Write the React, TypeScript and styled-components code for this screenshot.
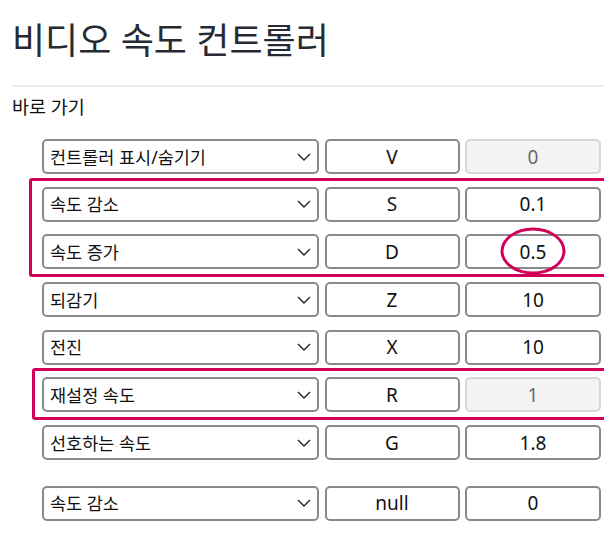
import React from "react";
import styled, { createGlobalStyle } from "styled-components";

const GlobalStyle = createGlobalStyle`
	html, body {
		margin: 0;
		padding: 0;
		background: #ffffff;
		overflow: hidden;
	}
	body {
		font-family: "Noto Sans", "Noto Sans CJK KR", sans-serif;
	}
`;

const KO = `"Noto Sans", "Noto Sans CJK KR", sans-serif`;
const PINK = "#d3005a";

const chevron = `url("data:image/svg+xml;utf8,<svg xmlns='http://www.w3.org/2000/svg' width='14' height='8' viewBox='0 0 14 8'><path d='M1 1l6 6 6-6' fill='none' stroke='%23222' stroke-width='1.4'/></svg>")`;

// **PAGE
const PageSC = styled.main`
	padding: 0 0 0 12px;
	width: 100%;
	box-sizing: border-box;
`;

const TitleSC = styled.h1`
	font-family: ${KO};
	font-size: 36px;
	font-weight: 400;
	line-height: 48px;
	color: #262b33;
	margin: 17px 0 0;
`;

const RuleSC = styled.hr`
	border: none;
	border-top: 2px solid #ececec;
	margin: 20px 0 0;
`;

const SectionSC = styled.h3`
	font-family: ${KO};
	font-size: 18.5px;
	font-weight: 400;
	line-height: 24px;
	color: #111;
	margin: 8px 0 0;
`;

// **SHORTCUT LIST
const ListSC = styled.section`
	display: flex;
	flex-direction: column;
	gap: 12.7px;
	padding-left: 30px;
	margin-top: 20px;
`;

const HighlightSC = styled.div<{ $inset: number }>`
	display: flex;
	flex-direction: column;
	gap: 12.7px;
	border: 3px solid ${PINK};
	border-radius: 3px;
	margin: -9px -40px -7.5px ${(p) => -(p.$inset + 3)}px;
	padding: 6px 0 4.5px ${(p) => p.$inset}px;
`;

const RowSC = styled.div<{ $spaced?: boolean }>`
	display: grid;
	grid-template-columns: 277px 135px 136px;
	column-gap: 5.5px;
	height: 35px;
	margin-top: ${(p) => (p.$spaced ? "13px" : "0")};
`;

const ActionSelectSC = styled.select`
	appearance: none;
	-webkit-appearance: none;
	box-sizing: border-box;
	height: 35px;
	width: 100%;
	margin: 0;
	padding: 0 30px 0 6px;
	font-family: ${KO};
	font-size: 17.5px;
	font-weight: 400;
	color: #111;
	background-color: #fff;
	background-image: ${chevron};
	background-repeat: no-repeat;
	background-position: right 6px center;
	border: 2px solid #8a8a8a;
	border-radius: 5px;
`;

const CellSC = styled.div`
	position: relative;
	height: 35px;
`;

const FieldSC = styled.input`
	box-sizing: border-box;
	width: 100%;
	height: 35px;
	margin: 0;
	padding: 0;
	text-align: center;
	font-family: ${KO};
	font-size: 19px;
	color: #111;
	background: #fff;
	border: 2px solid #8a8a8a;
	border-radius: 5px;

	&:disabled {
		background: #f4f4f4;
		color: #6a6a6a;
		border-color: #d6d6d6;
		-webkit-text-fill-color: #6a6a6a;
	}
`;

const RingSC = styled.span`
	position: absolute;
	left: 50%;
	top: 50%;
	width: 65px;
	height: 47px;
	box-sizing: border-box;
	border: 3px solid ${PINK};
	border-radius: 50%;
	transform: translate(-50%, -52%);
	pointer-events: none;
`;

type Shortcut = {
	action: string;
	key: string;
	value: string;
	locked?: boolean;
	ringed?: boolean;
};

const actions = [
	"컨트롤러 표시/숨기기",
	"속도 감소",
	"속도 증가",
	"되감기",
	"전진",
	"재설정 속도",
	"선호하는 속도",
];

const Row: React.FC<{ s: Shortcut; spaced?: boolean }> = ({ s, spaced }) => (
	<RowSC $spaced={spaced}>
		<ActionSelectSC defaultValue={s.action}>
			{actions.map((a) => (
				<option key={a}>{a}</option>
			))}
		</ActionSelectSC>
		<FieldSC readOnly value={s.key} />
		<CellSC>
			<FieldSC readOnly disabled={s.locked} value={s.value} />
			{s.ringed && <RingSC />}
		</CellSC>
	</RowSC>
);

export default function App() {
	return (
		<PageSC>
			<GlobalStyle />
			<TitleSC>비디오 속도 컨트롤러</TitleSC>
			<RuleSC />
			<SectionSC>바로 가기</SectionSC>
			<ListSC>
				<Row s={{ action: "컨트롤러 표시/숨기기", key: "V", value: "0", locked: true }} />
				<HighlightSC $inset={10}>
					<Row s={{ action: "속도 감소", key: "S", value: "0.1" }} />
					<Row s={{ action: "속도 증가", key: "D", value: "0.5", ringed: true }} />
				</HighlightSC>
				<Row s={{ action: "되감기", key: "Z", value: "10" }} />
				<Row s={{ action: "전진", key: "X", value: "10" }} />
				<HighlightSC $inset={7}>
					<Row s={{ action: "재설정 속도", key: "R", value: "1", locked: true }} />
				</HighlightSC>
				<Row s={{ action: "선호하는 속도", key: "G", value: "1.8" }} />
				<Row spaced s={{ action: "속도 감소", key: "null", value: "0" }} />
			</ListSC>
		</PageSC>
	);
}
